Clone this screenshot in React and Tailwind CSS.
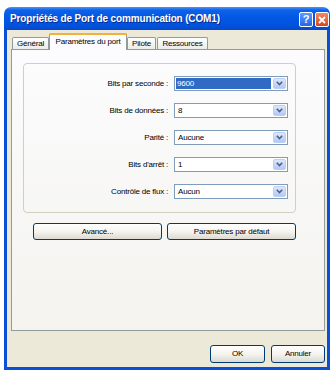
import React from "react";

function Chevron() {
  return (
    <svg width="7" height="5" viewBox="0 0 7 5">
      <path d="M0.8 0.8 L3.5 3.6 L6.2 0.8" fill="none" stroke="#4D6185" strokeWidth="1.6" />
    </svg>
  );
}

function Combo({ value, selected }) {
  return (
    <div className="w-[114px] h-[15px] border border-[#7F9DB9] bg-white flex items-stretch p-px">
      <div className="flex-1 flex items-stretch pr-[2px]">
        {selected ? (
          <span className="flex-1 bg-[#316AC5] text-white flex items-center pl-[1px]">{value}</span>
        ) : (
          <span className="flex-1 flex items-center pl-[2px] text-black">{value}</span>
        )}
      </div>
      <div className="w-[13px] rounded-[2px] bg-gradient-to-b from-[#DCE7FD] to-[#B2C8F5] border border-[#BCCFF5] flex items-center justify-center">
        <Chevron />
      </div>
    </div>
  );
}

function Row({ label, value, selected }) {
  return (
    <div className="flex items-center h-[15px]">
      <div className="w-[150px] text-right pr-[6px] text-black whitespace-nowrap">{label}</div>
      <Combo value={value} selected={selected} />
    </div>
  );
}

function XPButton({ children, className }) {
  return (
    <div
      className={
        "border border-[#003C74] rounded-[3px] bg-gradient-to-b from-[#FFFFFF] via-[#F5F4EF] to-[#DCDAD0] flex items-center justify-center text-black whitespace-nowrap " +
        className
      }
    >
      {children}
    </div>
  );
}

export default function App() {
  return (
    <div className="w-[334px] h-[371px] bg-white pt-[7px] pl-[4px] pr-[4px] pb-[1px] font-['Liberation_Sans',Arial,sans-serif] text-[8px] tracking-[-0.2px] leading-none">
      <div className="w-[326px] h-[363px] flex flex-col rounded-t-[7px] overflow-hidden">
        {/* Title bar */}
        <div className="h-[23px] shrink-0 flex items-center pl-[6px] pr-[1px] bg-[linear-gradient(to_bottom,#4A94F7_0%,#0E62E8_14%,#0257E4_45%,#0053DE_80%,#0648C9_100%)]">
          <div className="flex-1 text-white font-bold text-[10px] tracking-[-0.15px] whitespace-nowrap [text-shadow:1px_1px_0_#0A2A8A]">
            Propriétés de Port de communication (COM1)
          </div>
          <div className="flex gap-[2px] mt-[2px]">
            <div className="w-[14px] h-[15px] rounded-[2px] border border-white bg-gradient-to-b from-[#5B9BFF] to-[#2A64E6] flex items-center justify-center text-white font-bold text-[11px] tracking-normal">
              ?
            </div>
            <div className="w-[14px] h-[15px] rounded-[2px] border border-white bg-gradient-to-b from-[#F08A60] to-[#D9431C] flex items-center justify-center">
              <svg width="8" height="8" viewBox="0 0 8 8">
                <path d="M1 1 L7 7 M7 1 L1 7" stroke="#fff" strokeWidth="1.8" />
              </svg>
            </div>
          </div>
        </div>
        {/* Body */}
        <div className="flex-1 bg-[#ECE9D8] border-x-[3px] border-b-[3px] border-[#0A4FD8] flex flex-col pl-[4px] pr-[2px]">
          {/* Tabs */}
          <div className="h-[16px] flex items-end pl-[1px] mt-[3px] relative z-10 whitespace-nowrap">
            <div className="h-[12px] w-[37px] border border-b-0 border-[#919B9C] rounded-t-[2px] bg-gradient-to-b from-white to-[#ECEBE6] flex items-center justify-center text-black">
              Général
            </div>
            <div className="h-[17px] w-[78px] -mb-px border-x border-[#919B9C] rounded-t-[2px] bg-[#FCFCFE] flex flex-col text-black">
              <div className="h-[2px] bg-[#F3B03C] rounded-t-[2px] -mx-px"></div>
              <div className="flex-1 flex items-center justify-center pb-[2px]">Paramètres du port</div>
            </div>
            <div className="h-[12px] w-[29px] border border-b-0 border-[#919B9C] rounded-t-[2px] bg-gradient-to-b from-white to-[#ECEBE6] flex items-center justify-center text-black">
              Pilote
            </div>
            <div className="h-[12px] w-[51px] ml-px border border-b-0 border-[#919B9C] rounded-t-[2px] bg-gradient-to-b from-white to-[#ECEBE6] flex items-center justify-center text-black">
              Ressources
            </div>
          </div>
          {/* Panel */}
          <div className="h-[282px] border border-[#919B9C] bg-gradient-to-b from-[#FCFCFE] to-[#F4F3EE] pl-[11px] pt-[13px]">
            <div className="w-[273px] h-[150px] border border-[#D0D0BF] rounded-[4px] flex flex-col pt-[12px] gap-[12px]">
              <Row label="Bits par seconde :" value="9600" selected />
              <Row label="Bits de données :" value="8" />
              <Row label="Parité :" value="Aucune" />
              <Row label="Bits d'arrêt :" value="1" />
              <Row label="Contrôle de flux :" value="Aucun" />
            </div>
            <div className="flex gap-[5px] mt-[10px] pl-[10px]">
              <XPButton className="w-[129px] h-[17px]">Avancé...</XPButton>
              <XPButton className="w-[129px] h-[17px]">Paramètres par défaut</XPButton>
            </div>
          </div>
          {/* Bottom buttons */}
          <div className="flex justify-end gap-[6px] mt-[14px]">
            <XPButton className="w-[55px] h-[18px]">OK</XPButton>
            <XPButton className="w-[54px] h-[18px]">Annuler</XPButton>
          </div>
        </div>
      </div>
    </div>
  );
}
